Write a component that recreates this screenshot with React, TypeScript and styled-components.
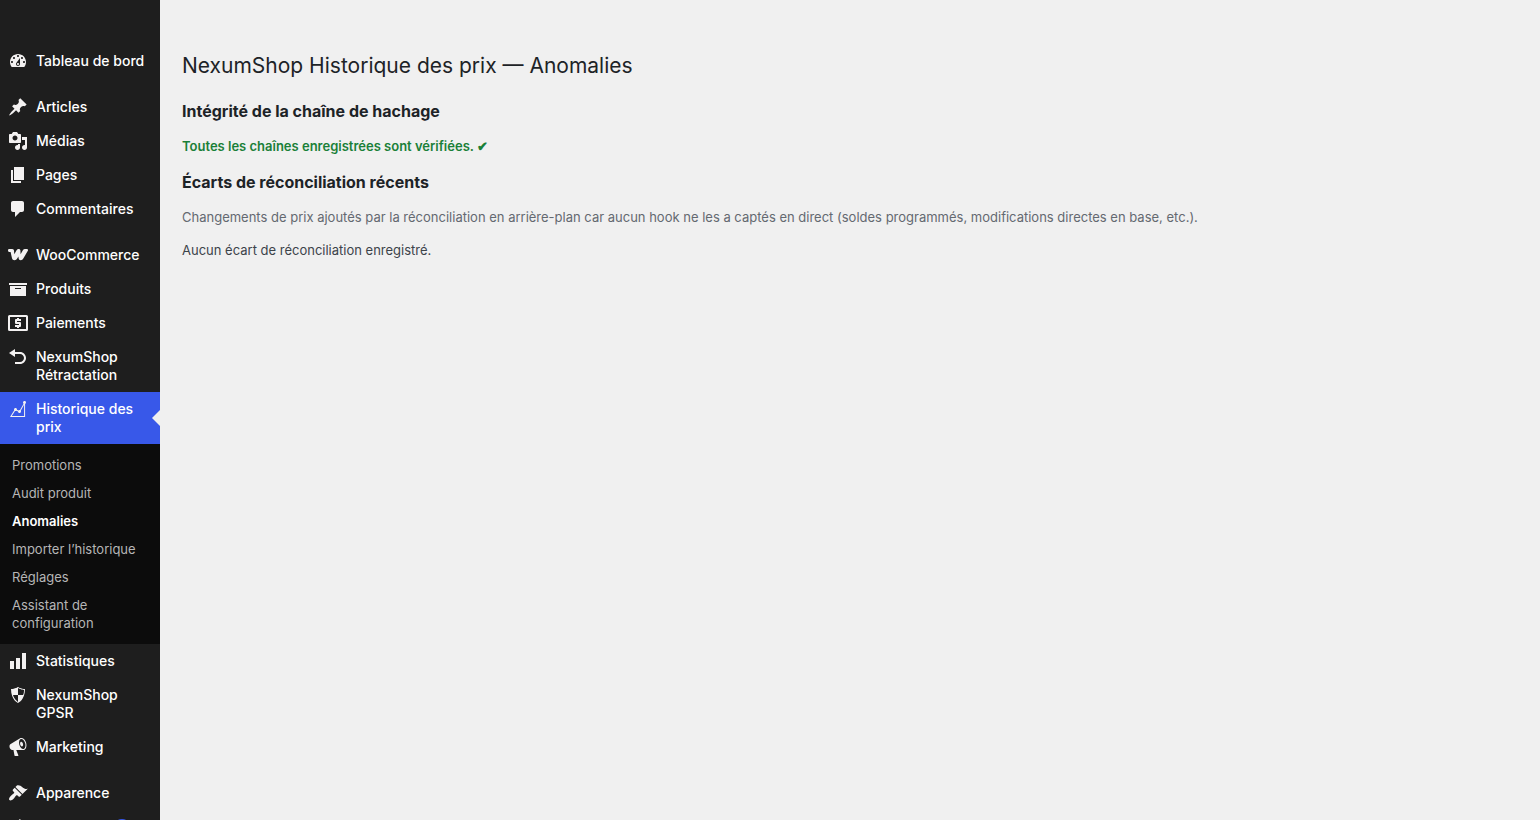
import React from 'react';
import styled, { createGlobalStyle, css } from 'styled-components';

const GlobalStyle = createGlobalStyle`
  * { box-sizing: border-box; }
  body {
    margin: 0;
    background: #f0f0f0;
    color: #3c434a;
    font-family: Inter, "Liberation Sans", sans-serif;
    font-size: 13px;
    line-height: 18px;
  }
`;

const Layout = styled.div`
  display: flex;
  height: 100vh;
`;

const Sidebar = styled.nav`
  flex: 0 0 160px;
  height: 100%;
  padding-top: 44px;
  overflow: hidden;
  background: #1e1e1e;
`;

const MenuList = styled.ul`
  margin: 0;
  padding: 0;
  list-style: none;
`;

const MenuItem = styled.li<{ $spaced?: boolean }>`
  margin-top: ${(p) => (p.$spaced ? 12 : 0)}px;
`;

const MenuLink = styled.a<{ $active?: boolean }>`
  position: relative;
  display: flex;
  gap: 8px;
  padding: 8px;
  color: #fff;
  font-size: 14px;
  font-weight: 500;
  text-decoration: none;
  ${(p) =>
    p.$active &&
    css`
      background: #3858e9;
      &::after {
        content: '';
        position: absolute;
        top: 50%;
        right: 0;
        margin-top: -8px;
        border: 8px solid transparent;
        border-left-width: 0;
        border-right-color: #f0f0f0;
      }
    `}
`;

const Icon = styled.svg`
  flex: none;
  width: 20px;
  height: 20px;
  margin: -1px 0;
  fill: #f3f1f1;
`;

const Badge = styled.span`
  display: inline-block;
  min-width: 18px;
  margin-left: 4px;
  padding: 0 5px;
  border-radius: 9px;
  background: #3858e9;
  font-size: 11px;
  text-align: center;
`;

const SubMenu = styled.ul`
  margin: 0;
  padding: 7px 0;
  list-style: none;
  background: #0c0c0c;
`;

const SubLink = styled.a<{ $current?: boolean }>`
  display: block;
  padding: 5px 12px;
  color: ${(p) => (p.$current ? '#fff' : '#b6b6b6')};
  font-weight: ${(p) => (p.$current ? 600 : 400)};
  text-decoration: none;
`;

const Content = styled.main`
  flex: 1;
  min-width: 0;
  padding: 48px 22px 20px;
`;

const PageTitle = styled.h1`
  margin: 0;
  color: #1d2327;
  font-size: 21px;
  font-weight: 400;
  line-height: 36px;
`;

const SectionTitle = styled.h2`
  margin: 18px 0 17px;
  color: #1d2327;
  font-size: 16px;
  font-weight: 700;
  line-height: 18px;
`;

const Text = styled.p<{ $tone?: 'success' | 'muted' }>`
  margin: 15px 0;
  ${(p) => p.$tone === 'success' && 'color: #1a8038; font-weight: 600;'}
  ${(p) => p.$tone === 'muted' && 'color: #646970;'}
`;

const paths = {
  dashboard:
    'M3.76 16h12.48c1.1-1.37 1.76-3.11 1.76-5 0-4.42-3.58-8-8-8s-8 3.58-8 8c0 1.89.66 3.63 1.76 5zM10 4c.55 0 1 .45 1 1s-.45 1-1 1-1-.45-1-1 .45-1 1-1zM6 6c.55 0 1 .45 1 1s-.45 1-1 1-1-.45-1-1 .45-1 1-1zm8 0c.55 0 1 .45 1 1s-.45 1-1 1-1-.45-1-1 .45-1 1-1zm-5.37 5.55L12 7v6c0 1.1-.9 2-2 2s-2-.9-2-2c0-.57.24-1.08.63-1.45zM4 10c.55 0 1 .45 1 1s-.45 1-1 1-1-.45-1-1 .45-1 1-1zm12 0c.55 0 1 .45 1 1s-.45 1-1 1-1-.45-1-1 .45-1 1-1zm-5 3c0-.55-.45-1-1-1s-1 .45-1 1 .45 1 1 1 1-.45 1-1z',
  post: 'M10.44 3.02l1.82-1.82 6.36 6.35-1.83 1.82c-1.05-.68-2.48-.57-3.41.36l-.75.75c-.92.93-1.04 2.35-.35 3.41l-1.83 1.82-2.41-2.41-2.8 2.79c-.42.42-3.38 2.71-3.8 2.29s1.86-3.39 2.28-3.81l2.79-2.79L4.1 9.36l1.83-1.82c1.05.69 2.48.57 3.4-.36l.75-.75c.93-.92 1.05-2.35.36-3.41z',
  media:
    'M13 11V4c0-.55-.45-1-1-1h-1.67L9 1H5L3.67 3H2c-.55 0-1 .45-1 1v7c0 .55.45 1 1 1h10c.55 0 1-.45 1-1zM7 4.5c1.38 0 2.5 1.12 2.5 2.5S8.38 9.5 7 9.5 4.5 8.38 4.5 7 5.62 4.5 7 4.5zM14 6h5v10.5c0 1.38-1.12 2.5-2.5 2.5S14 17.88 14 16.5s1.12-2.5 2.5-2.5c.17 0 .34.02.5.05V9h-3V6zm-4 8.05V13h2v3.5c0 1.38-1.12 2.5-2.5 2.5S7 17.88 7 16.5 8.12 14 9.5 14c.17 0 .34.02.5.05z',
  page: 'M6 15V2h10v13H6zm-1 1h8v2H3V5h2v11z',
  comments:
    'M5 2h9c1.1 0 2 .9 2 2v7c0 1.1-.9 2-2 2h-2l-5 5v-5H5c-1.1 0-2-.9-2-2V4c0-1.1.9-2 2-2z',
  woo: 'M0 5.200C0 4.400.6 3.900 1.500 3.900H4.200C5.400 3.900 5.900 4.600 6 5.700L6.300 9.200L8.700 5.100C9.200 4.300 9.700 3.900 10.600 3.900C11.700 3.900 12.400 4.500 12.400 5.600L12.600 9.200L15 5.100C15.500 4.300 16.100 3.900 17 3.900H18.600C19.900 3.900 20.400 4.900 19.700 6.100L15.300 13.500C14.600 14.700 13.900 15.200 12.800 15.200C11.500 15.200 10.800 14.600 10.600 13.300L10.400 11.500L9.200 13.500C8.500 14.700 7.700 15.200 6.500 15.200C5.100 15.200 4.300 14.600 4 13.300L2.600 7.100H1.500C.6 7.100 0 6.300 0 5.200z',
  archive: 'M19 4v2H1V4h18zM2 7h16v10H2V7zm11 3V9H7v1h6z',
  payments:
    'M1.500 2h17A1.500 1.500 0 0 1 20 3.500v13a1.500 1.500 0 0 1-1.500 1.500h-17A1.500 1.500 0 0 1 0 16.500v-13A1.500 1.500 0 0 1 1.500 2zM2 4v12h16V4zM9 5h2v1h2v2H9v1h3a1 1 0 0 1 1 1v3a1 1 0 0 1-1 1h-1v1H9v-1H7v-2h4v-1H8a1 1 0 0 1-1-1V7a1 1 0 0 1 1-1h1z',
  undo: 'M12 5H7V2L1 6l6 4V7h5c2.2 0 4 1.8 4 4s-1.8 4-4 4H7v2h5c3.3 0 6-2.7 6-6s-2.7-6-6-6z',
  chartLine:
    'M18 3.5c0 .62-.38 1.16-.92 1.38v13.11H1.99l4.22-6.73c-.13-.23-.21-.48-.21-.76C6 9.67 6.67 9 7.5 9S9 9.67 9 10.5c0 .13-.02.25-.05.37l1.44.63c.27-.3.67-.5 1.11-.5.18 0 .35.04.51.09l3.58-6.41c-.36-.27-.59-.7-.59-1.18 0-.83.67-1.5 1.5-1.5.19 0 .36.04.53.1l.05-.09v.11c.54.22.92.76.92 1.38zm-1.92 13.49V5.85l-3.29 5.89c.13.23.21.48.21.76 0 .83-.67 1.5-1.5 1.5s-1.5-.67-1.5-1.5l.01-.07-1.63-.72c-.25.18-.55.29-.88.29-.18 0-.35-.04-.51-.1l-3.2 5.09h12.29z',
  chartBar: 'M18 18V2h-4v16h4zm-6 0V7H8v11h4zm-6 0v-8H2v8h4z',
  shield:
    'M10 2s3 2 7 2c0 11-7 14-7 14S3 15 3 4c4 0 7-2 7-2zm0 8h5s1-1 1-5c0 0-5-1-6-2v7H5c1 4 5 7 5 7v-7z',
  megaphone:
    'M18.15 5.94c.46 1.62.38 3.22-.02 4.48-.42 1.28-1.26 2.18-2.3 2.48-.16.06-.26.06-.4.06-.06.02-.12.02-.18.02-.06.02-.14.02-.22.02h-6.8l2.22 5.5c.02.14-.06.26-.14.34-.08.1-.24.16-.34.16H6.95c-.1 0-.26-.06-.34-.16-.08-.08-.16-.2-.14-.34l-1-5.5H4.25l-.02-.02c-.5.06-1.08-.18-1.54-.62s-.88-1.08-1.06-1.88c-.24-.8-.2-1.56-.02-2.2.18-.62.58-1.08 1.06-1.3l.02-.02 9-5.4c.1-.06.18-.1.24-.16.06-.04.14-.08.24-.12.16-.08.28-.12.5-.18 1.04-.3 2.24.1 3.22.98s1.84 2.24 2.26 3.86zm-2.58 5.98h-.02c.4-.1.74-.34 1.04-.7.58-.7.86-1.76.86-3.04 0-.64-.1-1.3-.28-1.98-.34-1.36-1.02-2.5-1.78-3.24s-1.68-1.1-2.46-.88c-.82.22-1.4.96-1.7 2-.32 1.04-.28 2.36.06 3.72.38 1.36 1 2.5 1.8 3.24.78.74 1.62 1.1 2.48.88zm-2.54-7.08c.22-.04.42-.02.62.04.38.16.76.48 1.02 1s.42 1.2.42 1.78c0 .3-.04.56-.12.8-.18.48-.44.84-.86.94-.34.1-.8-.06-1.14-.4s-.64-.86-.78-1.5c-.18-.62-.12-1.24.02-1.72s.48-.84.82-.94z',
  appearance:
    'M14.48 11.06L7.41 3.99l1.5-1.5c.5-.56 2.3-.47 3.51.32 1.21.8 1.43 1.28 2.91 2.1 1.18.64 2.45 1.26 4.45.85zm-.71.71L6.7 4.7 4.93 6.47c-.39.39-.39 1.02 0 1.41l1.06 1.06c.39.39.39 1.03 0 1.42-.6.6-1.43 1.11-2.21 1.69-.35.26-.7.53-1.01.84C1.43 14.23.4 16.08 1.4 17.07c.99 1 2.84-.03 4.18-1.36.31-.31.58-.66.85-1.02.57-.78 1.08-1.61 1.69-2.21.39-.39 1.02-.39 1.41 0l1.06 1.06c.39.39 1.02.39 1.41 0z',
  plugins:
    'M13.11 4.36L9.87 7.6 8 5.73l3.24-3.24c.35-.34 1.05-.2 1.56.32.52.51.66 1.21.31 1.55zm-8 1.77l.91-1.12 9.01 9.01-1.19.84c-.71.71-2.63 1.16-3.82 1.16H6.14L4.9 17.26c-.59.59-1.54.59-2.12 0-.59-.58-.59-1.53 0-2.12l1.24-1.24v-3.88c0-1.13.4-3.19 1.09-3.89zm7.26 3.97l3.24-3.24c.34-.35 1.04-.21 1.55.31.52.51.66 1.21.31 1.55l-3.24 3.25z',
};

type Entry = {
  icon: keyof typeof paths;
  label: string;
  spaced?: boolean;
  badge?: number;
  children?: string[];
};

const menu: Entry[] = [
  { icon: 'dashboard', label: 'Tableau de bord' },
  { icon: 'post', label: 'Articles', spaced: true },
  { icon: 'media', label: 'Médias' },
  { icon: 'page', label: 'Pages' },
  { icon: 'comments', label: 'Commentaires' },
  { icon: 'woo', label: 'WooCommerce', spaced: true },
  { icon: 'archive', label: 'Produits' },
  { icon: 'payments', label: 'Paiements' },
  { icon: 'undo', label: 'NexumShop Rétractation' },
  {
    icon: 'chartLine',
    label: 'Historique des prix',
    children: [
      'Promotions',
      'Audit produit',
      'Anomalies',
      'Importer l’historique',
      'Réglages',
      'Assistant de configuration',
    ],
  },
  { icon: 'chartBar', label: 'Statistiques' },
  { icon: 'shield', label: 'NexumShop GPSR' },
  { icon: 'megaphone', label: 'Marketing' },
  { icon: 'appearance', label: 'Apparence', spaced: true },
  { icon: 'plugins', label: 'Extensions', badge: 1 },
];

export default function App() {
  const current = 'Anomalies';
  return (
    <Layout>
      <GlobalStyle />
      <Sidebar aria-label="Menu principal">
        <MenuList>
          {menu.map((entry) => (
            <MenuItem key={entry.label} $spaced={entry.spaced}>
              <MenuLink href="#" $active={!!entry.children}>
                <Icon viewBox="0 0 20 20" fillRule="evenodd" aria-hidden="true">
                  <path d={paths[entry.icon]} />
                </Icon>
                <span>
                  {entry.label}
                  {entry.badge && <Badge>{entry.badge}</Badge>}
                </span>
              </MenuLink>
              {entry.children && (
                <SubMenu>
                  {entry.children.map((label) => (
                    <li key={label}>
                      <SubLink href="#" $current={label === current}>
                        {label}
                      </SubLink>
                    </li>
                  ))}
                </SubMenu>
              )}
            </MenuItem>
          ))}
        </MenuList>
      </Sidebar>
      <Content>
        <PageTitle>NexumShop Historique des prix — Anomalies</PageTitle>
        <SectionTitle>Intégrité de la chaîne de hachage</SectionTitle>
        <Text $tone="success">Toutes les chaînes enregistrées sont vérifiées. ✔</Text>
        <SectionTitle>Écarts de réconciliation récents</SectionTitle>
        <Text $tone="muted">
          Changements de prix ajoutés par la réconciliation en arrière-plan car aucun hook ne les a
          captés en direct (soldes programmés, modifications directes en base, etc.).
        </Text>
        <Text>Aucun écart de réconciliation enregistré.</Text>
      </Content>
    </Layout>
  );
}
